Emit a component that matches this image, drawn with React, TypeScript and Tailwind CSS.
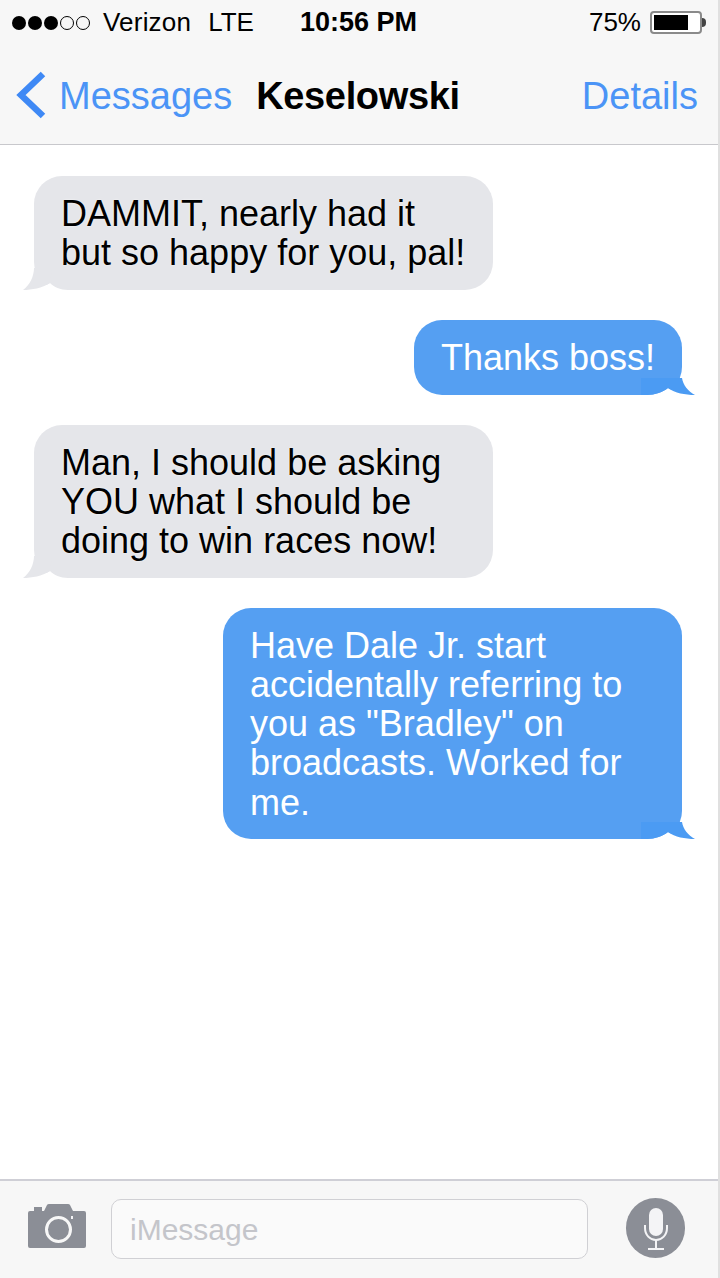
import React from "react";

const FONT = "font-['Liberation_Sans',Arial,sans-serif]";

// the white path paints the notch between the tail and the rounded corner
const Tail = ({ side, color }: { side: "left" | "right"; color: string }) =>
    side === "left" ? (
        <svg className="absolute left-[-12px] bottom-0" width="46" height="22" viewBox="0 0 46 22">
            <path d="M1 22 C10 22 20 20 28 15 C32 19 38 22 46 22 Z" fill="#ffffff" />
            <path d="M12 0 C12 8 8 17 1 22 C10 22 20 20 28 15 L30 0 Z" fill={color} />
        </svg>
    ) : (
        <svg className="absolute right-[-13px] bottom-0" width="54" height="17" viewBox="0 0 54 17">
            <path d="M6 17 C14 17 22 14 27 10 C34 15 44 17 54 17 Z" fill="#ffffff" />
            <path d="M0 0 L41 0 C42 7 47 13 54 17 C44 17 34 15 27 10 C22 14 14 17 6 17 L0 17 Z" fill={color} />
        </svg>
    );

const Bubble = ({ lines, me, width }: { lines: string[]; me?: boolean; width: string }) => (
    <div
        className={`relative rounded-[28px] pl-[27px] pt-[18px] pb-[17.5px] text-[36px] leading-[39.2px] ${width} ${
            me
                ? "self-end bg-[#559ff2] text-white"
                : "self-start bg-[#e5e6ea] text-black [text-shadow:0_0_2px_rgba(255,255,255,0.9)]"
        }`}
    >
        {lines.map((l) => (
            <div key={l} className="relative z-10 whitespace-nowrap">{l}</div>
        ))}
        <Tail side={me ? "right" : "left"} color={me ? "#4b9bf3" : "#e5e6ea"} />
    </div>
);

const Dots = () => (
    <div className="flex items-center gap-[2px] mt-[1px]">
        {[0, 1, 2].map((i) => (
            <span key={i} className="w-[14px] h-[14px] rounded-full bg-black" />
        ))}
        {[3, 4].map((i) => (
            <span key={i} className="w-[14px] h-[14px] rounded-full border border-black" />
        ))}
    </div>
);

const Battery = () => (
    <div className="flex items-center">
        <div className="w-[52px] h-[23px] rounded-[4px] border-2 border-[#8a8a8a] bg-white p-[2px] flex">
            <div className="w-[34px] h-full bg-black" />
        </div>
        <div className="w-[4px] h-[9px] bg-[#444] rounded-r-sm" />
    </div>
);

const CameraIcon = () => (
    <svg className="mb-[7px]" width="58" height="44" viewBox="0 0 58 44">
        <path
            fill="#8b8e96"
            fillRule="evenodd"
            d="M2 7 H6 V3 H14 V7 H16 L19 1 Q19.5 0 21 0 H40 Q41.5 0 42 1 L45 7 H56 Q58 7 58 9 V42 Q58 44 56 44 H2 Q0 44 0 42 V9 Q0 7 2 7 Z M30.5 12 A13.5 13.5 0 1 0 30.51 39 A13.5 13.5 0 1 0 30.5 12 Z M30.5 15 A10.5 10.5 0 1 1 30.49 36 A10.5 10.5 0 1 1 30.5 15 Z"
        />
        <rect x="43" y="12" width="2" height="3" fill="#f4f4f6" />
    </svg>
);

const MicIcon = () => (
    <div className="mb-[3px] ml-[38px] w-[59px] h-[60px] rounded-full bg-[#8b8e96] flex items-center justify-center">
        <svg width="30" height="46" viewBox="0 0 30 46" fill="none">
            <rect x="8" y="3" width="14" height="28" rx="7" fill="#f4f4f6" />
            <path d="M4 20 V23 C4 30 9 35 15 35 C21 35 26 30 26 23 V20" stroke="#f4f4f6" strokeWidth="2" />
            <path d="M15 35 V44 M7 44 H23" stroke="#f4f4f6" strokeWidth="2" />
        </svg>
    </div>
);

export default function App() {
    return (
        <div className={`${FONT} w-[720px] h-[1278px] flex flex-col bg-white border-r-2 border-[#e0e0e0] overflow-hidden`}>
            {/* Status bar and nav */}
            <header className="h-[145px] shrink-0 bg-[#f7f7f7] border-b border-[#c8c8cc] text-black">
                <div className="h-[45px] flex items-center pl-[12px] pr-[12px] text-[26px]">
                    <Dots />
                    <span className="ml-[13px] tracking-[0.2px]">Verizon</span>
                    <span className="ml-[17px]">LTE</span>
                    <span className="ml-[46px] text-[27px] font-bold">10:56 PM</span>
                    <span className="ml-auto mr-[9px]">75%</span>
                    <Battery />
                </div>
                <div className="h-[99px] flex items-center">
                    <svg className="ml-[16px]" width="30" height="48" viewBox="0 0 30 48" fill="none">
                        <path d="M27 3 L5 24 L27 45" stroke="#3f89f5" strokeWidth="6.5" />
                    </svg>
                    <span className="mt-[3px] ml-[13px] text-[38px] text-[#4b94f6]">Messages</span>
                    <span className="mt-[3px] ml-[24px] text-[38px] font-bold tracking-[-0.35px]">Keselowski</span>
                    <span className="mt-[3px] ml-auto mr-[20px] text-[38px] text-[#4b94f6]">Details</span>
                </div>
            </header>

            {/* Conversation */}
            <main className="flex-1 flex flex-col gap-[30px] pt-[31px] pl-[34px] pr-[36px]">
                <Bubble width="w-[459px]" lines={["DAMMIT, nearly had it", "but so happy for you, pal!"]} />
                <Bubble me width="w-[268px]" lines={["Thanks boss!"]} />
                <Bubble width="w-[459px]" lines={["Man, I should be asking", "YOU what I should be", "doing to win races now!"]} />
                <Bubble
                    me
                    width="w-[459px]"
                    lines={["Have Dale Jr. start", "accidentally referring to", 'you as "Bradley" on', "broadcasts. Worked for", "me."]}
                />
            </main>

            {/* Input bar */}
            <footer className="h-[99px] shrink-0 bg-[#f7f7f7] border-t-2 border-[#cfcfd6] flex items-center pl-[28px]">
                <CameraIcon />
                <div className="mb-[1px] ml-[25px] w-[477px] h-[60px] rounded-[10px] border border-[#d0d0d4] bg-[#fafafa] flex items-center pl-[18px] text-[30px] text-[#c4c5ca]">
                    iMessage
                </div>
                <MicIcon />
            </footer>
        </div>
    );
}
